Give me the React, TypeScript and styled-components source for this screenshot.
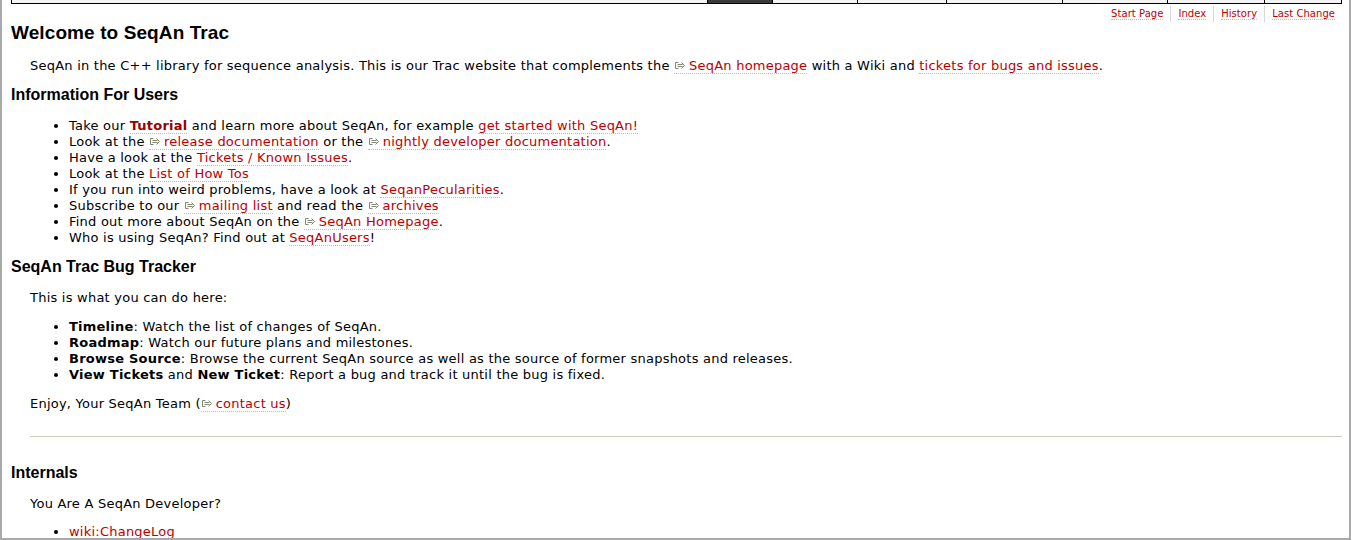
import styled, { createGlobalStyle } from "styled-components";

const GlobalStyle = createGlobalStyle`
  html, body {
    margin: 0;
    padding: 0;
    background: #ffffff;
  }
  body {
    font: normal 13px/16px "DejaVu Sans", Verdana, sans-serif;
    letter-spacing: 0.23px;
    color: #000000;
  }
`;

const Frame = styled.div`
  box-sizing: border-box;
  width: 1351px;
  height: 540px;
  overflow: hidden;
  border: 2px solid #a9a9a9;
  border-top: none;
  padding: 0 7px 0 9px;
`;

const MainNav = styled.div`
  display: flex;
  justify-content: flex-end;
  height: 3px;
  border: 1px solid #000;
  border-top: none;
  background: #f4f4f4;
`;

const Tab = styled.div<{ $w: number; $active?: boolean }>`
  box-sizing: border-box;
  width: ${(p) => p.$w}px;
  border-left: 1px solid #000;
  background: ${(p) => (p.$active ? "#3a3a3a" : "transparent")};
`;

const CtxtNav = styled.ul`
  display: flex;
  justify-content: flex-end;
  list-style: none;
  margin: 2px 0 0;
  padding: 0;
  font-size: 10px;
  line-height: 16px;
  letter-spacing: 0.05px;
`;

const CtxtItem = styled.li<{ $first?: boolean }>`
  padding: 0 7px;
  border-left: ${(p) => (p.$first ? "none" : "1px solid #d7d7d7")};
`;

const Link = styled.a<{ $strong?: boolean }>`
  color: ${(p) => (p.$strong ? "#990000" : "#bb0000")};
  font-weight: ${(p) => (p.$strong ? "bold" : "normal")};
  text-decoration: none;
  border-bottom: 1px dotted #bbbbbb;
  cursor: pointer;
`;

const Title = styled.h1`
  font: bold 19px/22px "Liberation Sans", Arial, sans-serif;
  letter-spacing: 0.1px;
  margin: 0 0 14px;
`;

const Heading = styled.h2<{ $top?: number; $bottom?: number }>`
  font: bold 16px/19px "Liberation Sans", Arial, sans-serif;
  letter-spacing: 0;
  margin: ${(p) => p.$top ?? 0}px 0 ${(p) => p.$bottom ?? 14}px;
`;

const Indent = styled.div`
  margin: 0 0 0 19px;
`;

const Para = styled.p<{ $top?: number; $bottom?: number }>`
  margin: ${(p) => p.$top ?? 0}px 0 ${(p) => p.$bottom ?? 13}px;
`;

const List = styled.ul`
  margin: 0;
  padding: 0 0 0 39px;
  list-style: disc;
`;

const Rule = styled.hr`
  border: none;
  border-top: 1px solid #ccccbb;
  height: 0;
  margin: 0 0 26px;
`;

const ExtIcon = () => (
  <svg
    width="12"
    height="9"
    viewBox="0 0 12 9"
    style={{ marginRight: 3, verticalAlign: "0px" }}
  >
    <path d="M4.5 1.5H1.5V7.5H4.5" fill="none" stroke="#7f876f" strokeWidth="1" />
    <path d="M3.5 3.5H8.5M3.5 5.5H8.5" fill="none" stroke="#7f876f" strokeWidth="1" />
    <path d="M7.5 1.5L10.5 4.5L7.5 7.5" fill="none" stroke="#7f876f" strokeWidth="1" />
  </svg>
);

const Ext = ({ children }: { children: string }) => (
  <Link>
    <ExtIcon />
    {children}
  </Link>
);

const tabs = [
  { w: 65, active: true },
  { w: 85 },
  { w: 89 },
  { w: 116 },
  { w: 105 },
  { w: 97 },
  { w: 77 },
];

const ctxt = ["Start Page", "Index", "History", "Last Change"];

export default function App() {
  return (
    <>
      <GlobalStyle />
      <Frame>
        <MainNav>
          {tabs.map((t, i) => (
            <Tab key={i} $w={t.w} $active={t.active} />
          ))}
        </MainNav>
        <CtxtNav>
          {ctxt.map((c, i) => (
            <CtxtItem key={c} $first={i === 0}>
              <Link>{c}</Link>
            </CtxtItem>
          ))}
        </CtxtNav>

        <Title>Welcome to SeqAn Trac</Title>
        <Indent>
          <Para $bottom={11}>
            SeqAn in the C++ library for sequence analysis. This is our Trac website
            that complements the <Ext>SeqAn homepage</Ext> with a Wiki and{" "}
            <Link>tickets for bugs and issues</Link>.
          </Para>
        </Indent>

        <Heading>Information For Users</Heading>
        <Indent>
          <List>
            <li>
              Take our <Link $strong>Tutorial</Link> and learn more about SeqAn, for
              example <Link>get started with SeqAn!</Link>
            </li>
            <li>
              Look at the <Ext>release documentation</Ext> or the{" "}
              <Ext>nightly developer documentation</Ext>.
            </li>
            <li>
              Have a look at the <Link>Tickets / Known Issues</Link>.
            </li>
            <li>
              Look at the <Link>List of How Tos</Link>
            </li>
            <li>
              If you run into weird problems, have a look at{" "}
              <Link>SeqanPecularities</Link>.
            </li>
            <li>
              Subscribe to our <Ext>mailing list</Ext> and read the <Ext>archives</Ext>
            </li>
            <li>
              Find out more about SeqAn on the <Ext>SeqAn Homepage</Ext>.
            </li>
            <li>
              Who is using SeqAn? Find out at <Link>SeqAnUsers</Link>!
            </li>
          </List>
        </Indent>

        <Heading $top={11} $bottom={14}>
          SeqAn Trac Bug Tracker
        </Heading>
        <Indent>
          <Para>This is what you can do here:</Para>
          <List>
            <li>
              <b>Timeline</b>: Watch the list of changes of SeqAn.
            </li>
            <li>
              <b>Roadmap</b>: Watch our future plans and milestones.
            </li>
            <li>
              <b>Browse Source</b>: Browse the current SeqAn source as well as the
              source of former snapshots and releases.
            </li>
            <li>
              <b>View Tickets</b> and <b>New Ticket</b>: Report a bug and track it
              until the bug is fixed.
            </li>
          </List>
          <Para $top={13} $bottom={24}>
            Enjoy, Your SeqAn Team (<Ext>contact us</Ext>)
          </Para>
          <Rule />
        </Indent>

        <Heading>Internals</Heading>
        <Indent>
          <Para $bottom={12}>You Are A SeqAn Developer?</Para>
          <List>
            <li>
              <Link>wiki:ChangeLog</Link>
            </li>
          </List>
        </Indent>
      </Frame>
    </>
  );
}
